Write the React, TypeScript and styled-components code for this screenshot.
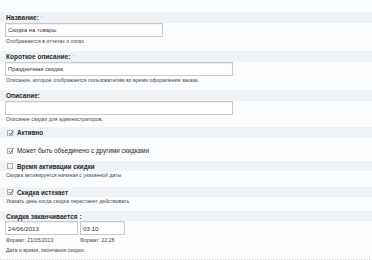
import React from 'react';
import styled, {createGlobalStyle} from 'styled-components';

const Global = createGlobalStyle`
  html, body {
    margin: 0;
    padding: 0;
    background: #fbfcfd;
    font-family: "Liberation Sans", Arial, sans-serif;
    color: #333;
  }
`;

const Form = styled.div`
  width: 372px;
  height: 260px;
  padding-top: 12px;
  box-sizing: border-box;
  overflow: hidden;
  background: #fbfcfd;
  border-bottom: 1px dotted #d8dadc;
`;

// полоса с заголовком поля
const Band = styled.div<{h?: number; mt?: number}>`
  height: ${p => p.h ?? 11}px;
  margin-top: ${p => p.mt ?? 0}px;
  padding-left: 6px;
  background: #f0f3f6;
  display: flex;
  align-items: center;
  font-size: 6.5px;
  font-weight: bold;
  color: #2a2a2a;
`;

const Star = styled.span`
  color: #d6d0d0;
  font-weight: normal;
  margin-left: 2px;
`;

const Input = styled.div<{w: number}>`
  width: ${p => p.w}px;
  height: 14px;
  margin-left: 5px;
  box-sizing: border-box;
  border: 1px solid #c9c9c9;
  box-shadow: inset 0 1px 1px #eee;
  background: #fff;
  padding-left: 2px;
  display: flex;
  align-items: center;
  font-size: 5.8px;
  color: #333;
`;

const Desc = styled.div<{h?: number; mt?: number; ml?: number}>`
  height: ${p => p.h ?? 8}px;
  margin-top: ${p => p.mt ?? 0}px;
  margin-left: ${p => p.ml ?? 6}px;
  display: flex;
  align-items: center;
  font-size: 5.2px;
  color: #4a4a4a;
  white-space: nowrap;
`;

const Item = styled.div`
  margin-bottom: 6px;
`;

const CheckRow = styled.div<{band?: boolean; bold?: boolean; h?: number; mt?: number}>`
  height: ${p => p.h ?? 11}px;
  margin-top: ${p => p.mt ?? 0}px;
  padding-left: 7px;
  display: flex;
  align-items: center;
  gap: 4px;
  background: ${p => (p.band ? '#f0f3f6' : 'transparent')};
  font-size: 6.3px;
  font-weight: ${p => (p.bold ? 'bold' : 'normal')};
  color: #2a2a2a;
`;

const Box = styled.span`
  width: 6px;
  height: 6px;
  box-sizing: border-box;
  border: 1px solid #b0b0b0;
  background: #f4f4f4;
  position: relative;
  flex: none;

  > svg {
    position: absolute;
    left: -1px;
    top: -2px;
  }
`;

const Pair = styled.div`
  display: flex;
  gap: 2px;
  margin-left: 5px;

  > div {
    margin-left: 0;
    font-size: 6.2px;
  }
`;

const Formats = styled.div`
  display: flex;

  > div:first-child {
    width: 74px;
  }
`;

function Check({checked}: {checked?: boolean}) {
    return (
        <Box>
            {checked &&
                <svg width="8" height="8" viewBox="0 0 8 8">
                    <path d="M1.8 4 L3.4 5.8 L6.6 1.6" fill="none" stroke="#707070" strokeWidth="1"/>
                </svg>}
        </Box>
    );
}

export default function App() {
    return (
        <Form>
            <Global/>
            <Item>
                <Band>Название:<Star>*</Star></Band>
                <Input w={158}>Скидка на товары</Input>
                <Desc>Отображается в отчетах и логах.</Desc>
            </Item>
            <Item>
                <Band>Короткое описание:<Star>*</Star></Band>
                <Input w={228}>Праздничная скидка</Input>
                <Desc>Описание, которое отображается пользователям во время оформления заказа.</Desc>
            </Item>
            <Item>
                <Band>Описание:</Band>
                <Input w={228}/>
                <Desc>Описание скидки для администраторов.</Desc>
            </Item>
            <CheckRow band bold mt={-2}><Check checked/>Активно</CheckRow>
            <CheckRow mt={7}><Check checked/>Может быть объединено с другими скидками</CheckRow>
            <CheckRow band bold h={10} mt={5}><Check/>Время активации скидки</CheckRow>
            <Desc>Скидка активируется начиная с указанной даты</Desc>
            <CheckRow band bold h={10} mt={8}><Check checked/>Скидка истекает</CheckRow>
            <Desc>Указать день когда скидка перестанет действовать</Desc>
            <Band h={10} mt={6}>Скидка заканчивается :</Band>
            <Pair>
                <Input w={73}>24/06/2013</Input>
                <Input w={45}>03:10</Input>
            </Pair>
            <Formats>
                <Desc h={9}>Формат: 21/05/2013</Desc>
                <Desc h={9} ml={0}>Формат: 22:28</Desc>
            </Formats>
            <Desc mt={2}>Дата и время, окончания скидки.</Desc>
        </Form>
    );
}
